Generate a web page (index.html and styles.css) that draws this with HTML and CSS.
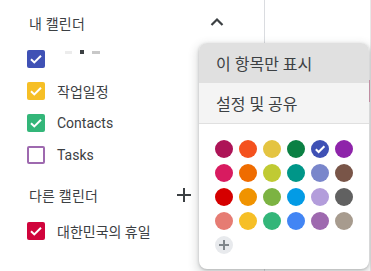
FILE: index.html
```html
<!DOCTYPE html>
<html lang="ko">
<head>
<meta charset="utf-8">
<link rel="stylesheet" href="styles.css">
</head>
<body>
<div class="app">
  <aside class="sidebar">
    <div class="section-head">
      <span class="head-label">내 캘린더</span>
      <span class="head-icon chevron">
        <svg width="24" height="24" viewBox="0 0 24 24"><path d="M6.5 15 L12 9.5 L17.5 15" fill="none" stroke="#3c4043" stroke-width="2.2"/></svg>
      </span>
    </div>
    <div class="cal-row">
      <span class="cb cb-blue"><svg width="18" height="18" viewBox="0 0 18 18"><path d="M4 9.2 L7.3 12.4 L14 5.8" fill="none" stroke="#fff" stroke-width="2"/></svg></span>
      <span class="masked"><i class="m1"></i><i class="m2"></i><i class="m3"></i></span>
    </div>
    <div class="cal-row">
      <span class="cb cb-yellow"><svg width="18" height="18" viewBox="0 0 18 18"><path d="M4 9.2 L7.3 12.4 L14 5.8" fill="none" stroke="#fff" stroke-width="2"/></svg></span>
      <span class="cal-name">작업일정</span>
    </div>
    <div class="cal-row">
      <span class="cb cb-green"><svg width="18" height="18" viewBox="0 0 18 18"><path d="M4 9.2 L7.3 12.4 L14 5.8" fill="none" stroke="#fff" stroke-width="2"/></svg></span>
      <span class="cal-name">Contacts</span>
    </div>
    <div class="cal-row">
      <span class="cb cb-outline"></span>
      <span class="cal-name">Tasks</span>
    </div>
    <div class="section-head second">
      <span class="head-label">다른 캘린더</span>
      <span class="head-icon plus">
        <svg width="24" height="24" viewBox="0 0 24 24"><path d="M12 5 V19 M5 12 H19" fill="none" stroke="#3c4043" stroke-width="2"/></svg>
      </span>
    </div>
    <div class="cal-row">
      <span class="cb cb-red"><svg width="18" height="18" viewBox="0 0 18 18"><path d="M4 9.2 L7.3 12.4 L14 5.8" fill="none" stroke="#fff" stroke-width="2"/></svg></span>
      <span class="cal-name">대한민국의 휴일</span>
    </div>
  </aside>
  <main class="main">
    <div class="event"></div>
  </main>
</div>

<div class="menu">
  <div class="menu-item active">이 항목만 표시</div>
  <div class="menu-item hover">설정 및 공유</div>
  <div class="palette">
    <span class="dot" style="background:#ad1457"></span>
    <span class="dot" style="background:#f4511e"></span>
    <span class="dot" style="background:#e4c441"></span>
    <span class="dot" style="background:#0b8043"></span>
    <span class="dot" style="background:#3f51b5"><svg width="18" height="18" viewBox="0 0 18 18"><path d="M4.8 9.3 L7.6 12 L13.4 6.2" fill="none" stroke="#fff" stroke-width="2"/></svg></span>
    <span class="dot" style="background:#8e24aa"></span>
    <span class="dot" style="background:#d81b60"></span>
    <span class="dot" style="background:#ef6c00"></span>
    <span class="dot" style="background:#c0ca33"></span>
    <span class="dot" style="background:#009688"></span>
    <span class="dot" style="background:#7986cb"></span>
    <span class="dot" style="background:#795548"></span>
    <span class="dot" style="background:#d50000"></span>
    <span class="dot" style="background:#f09300"></span>
    <span class="dot" style="background:#7cb342"></span>
    <span class="dot" style="background:#039be5"></span>
    <span class="dot" style="background:#b39ddb"></span>
    <span class="dot" style="background:#616161"></span>
    <span class="dot" style="background:#e67c73"></span>
    <span class="dot" style="background:#f6bf26"></span>
    <span class="dot" style="background:#33b679"></span>
    <span class="dot" style="background:#4285f4"></span>
    <span class="dot" style="background:#9e69af"></span>
    <span class="dot" style="background:#a79b8e"></span>
    <span class="dot add"><svg width="18" height="18" viewBox="0 0 18 18"><path d="M9 4 V14 M4 9 H14" fill="none" stroke="#80868b" stroke-width="2"/></svg></span>
  </div>
</div>
</body>
</html>
```
FILE: styles.css
```css
html, body {
  margin: 0;
  padding: 0;
  background: #fff;
}
body {
  width: 371px;
  height: 271px;
  overflow: hidden;
  position: relative;
  font-family: Roboto, "Noto Sans CJK KR", sans-serif;
  color: #3c4043;
}
.app {
  display: flex;
  height: 271px;
}
.sidebar {
  width: 264px;
  flex: none;
  padding-top: 3px;
  box-sizing: border-box;
}
.section-head {
  display: flex;
  align-items: center;
  height: 40px;
  padding-left: 29px;
}
.section-head.second {
  margin-top: 4px;
}
.head-label {
  font-size: 14px;
  letter-spacing: 0.2px;
}
.head-icon {
  margin-left: auto;
  width: 24px;
  height: 24px;
  display: flex;
}
.head-icon.chevron {
  margin-right: 35px;
  margin-top: -2px;
}
.head-icon.plus {
  margin-right: 68px;
}
.cal-row {
  display: flex;
  align-items: center;
  height: 32px;
  padding-left: 27px;
  gap: 12px;
}
.cb {
  width: 18px;
  height: 18px;
  border-radius: 2px;
  box-sizing: border-box;
  display: flex;
  flex: none;
}
.cb-blue { background: #3f51b5; }
.cb-yellow { background: #f6bf26; }
.cb-green { background: #33b679; }
.cb-red { background: #d0043c; }
.cb-outline { border: 2px solid #9e69af; }
.cal-name {
  font-size: 14px;
  color: #3c4043;
}
.masked {
  position: relative;
  width: 50px;
  height: 32px;
}
.masked i {
  position: absolute;
  display: block;
}
.masked .m1 { left: 8px; top: 8px; width: 7px; height: 3px; background: #ececec; }
.masked .m2 { left: 23px; top: 7px; width: 4px; height: 4px; background: #3c4043; }
.masked .m3 { left: 35px; top: 8px; width: 8px; height: 3px; background: #c8c8c8; }
.main {
  flex: 1;
  border-left: 1px solid #dadce0;
  border-right: 1px solid #e8e8e8;
  display: flex;
  flex-direction: column;
}
.event {
  margin-top: 80px;
  margin-left: auto;
  width: 20px;
  height: 22px;
  background: #e3a3bb;
}
.menu {
  position: absolute;
  left: 199px;
  top: 43px;
  width: 170px;
  height: 226px;
  background: #fff;
  border-radius: 8px;
  overflow: hidden;
  box-shadow: 0 1px 3px rgba(60,64,67,0.3), 0 4px 8px 3px rgba(60,64,67,0.15);
}
.menu-item {
  height: 40px;
  display: flex;
  align-items: center;
  padding-left: 17px;
  font-size: 16px;
  color: #3c4043;
}
.menu-item.active { background: #e0e0e0; }
.menu-item.hover { background: #f4f4f4; border-bottom: 1px solid #e0e0e0; }
.palette {
  display: grid;
  grid-template-columns: repeat(6, 18px);
  grid-auto-rows: 18px;
  gap: 6px;
  padding: 16px 0 0 16px;
}
.dot {
  width: 18px;
  height: 18px;
  border-radius: 50%;
  display: flex;
}
.dot.add { background: #e8eaed; }
```
